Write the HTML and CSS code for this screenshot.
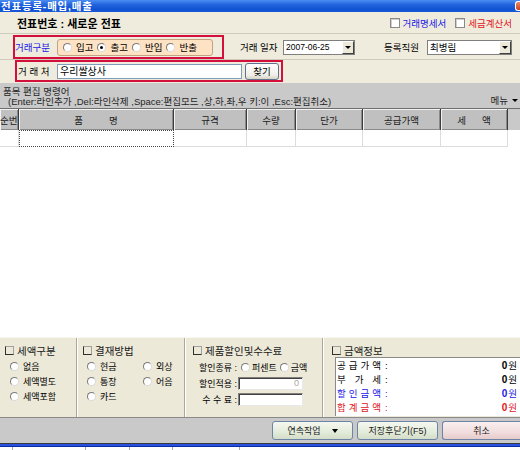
FILE: index.html
```html
<!DOCTYPE html>
<html lang="ko">
<head>
<meta charset="utf-8">
<title>전표등록-매입,매출</title>
<link rel="stylesheet" href="styles.css">
</head>
<body>
<div class="titlebar"><span class="title">전표등록-매입,매출</span><span class="closebtn"></span></div>

<div class="row1">
  <span class="docno">전표번호 : 새로운 전표</span>
  <div class="chks">
    <span class="chk"><span class="cbox"></span><span class="blue">거래명세서</span></span>
    <span class="chk"><span class="cbox"></span><span class="red">세금계산서</span></span>
  </div>
</div>

<div class="row2">
  <div class="redbox rb1">
    <span class="blue lbl-type">거래구분</span>
    <div class="orange">
      <span class="radio"><span class="rc"></span>입고</span>
      <span class="radio"><span class="rc on"></span>출고</span>
      <span class="radio"><span class="rc"></span>반입</span>
      <span class="radio"><span class="rc"></span>반출</span>
    </div>
  </div>
  <span class="lbl date-lbl">거래 일자</span>
  <div class="combo date"><span class="val num">2007-06-25</span><span class="dd"></span></div>
  <span class="lbl staff-lbl">등록직원</span>
  <div class="combo staff"><span class="val">최병림</span><span class="dd"></span></div>
</div>

<div class="row3">
  <div class="redbox rb2">
    <span class="vendor-lbl">거 래 처</span>
    <div class="input vendor">우리쌀상사</div>
    <div class="btn find">찾기</div>
  </div>
</div>

<div class="cmdbar">
  <div class="cmdtext">
    <div class="cmd1">품목 편집 명령어</div>
    <div class="cmd2">(Enter:라인추가 ,Del:라인삭제 ,Space:편집모드 ,상,하,좌,우 키:이 ,Esc:편집취소)</div>
  </div>
  <div class="menu">메뉴 <span class="tri"></span></div>
</div>

<div class="grid">
  <div class="ghead">
    <div class="gh c1">순번</div>
    <div class="gh c2"><span>품</span><span class="sp2">명</span></div>
    <div class="gh c3">규격</div>
    <div class="gh c4">수량</div>
    <div class="gh c5">단가</div>
    <div class="gh c6">공급가액</div>
    <div class="gh c7"><span>세</span><span class="sp7">액</span></div>
  </div>
  <div class="grow">
    <div class="gc c1"></div>
    <div class="gc c2 focus"></div>
    <div class="gc c3"></div>
    <div class="gc c4"></div>
    <div class="gc c5"></div>
    <div class="gc c6"></div>
    <div class="gc c7"></div>
  </div>
</div>

<div class="bottom">
  <div class="grp g1">
    <div class="ghd"><span class="ico"></span>세액구분</div>
    <div class="items">
      <div class="item"><span class="rc"></span>없음</div>
      <div class="item"><span class="rc"></span>세액별도</div>
      <div class="item"><span class="rc"></span>세액포함</div>
    </div>
  </div>
  <div class="grp g2">
    <div class="ghd"><span class="ico"></span>결재방법</div>
    <div class="items pay">
      <div class="item"><span class="rc"></span>현금</div>
      <div class="item"><span class="rc"></span>외상</div>
      <div class="item"><span class="rc"></span>통장</div>
      <div class="item"><span class="rc"></span>어음</div>
      <div class="item"><span class="rc"></span>카드</div>
    </div>
  </div>
  <div class="grp g3">
    <div class="ghd"><span class="ico"></span>제품할인및수수료</div>
    <div class="items disc">
      <div class="drow"><span class="dlbl">할인종류 :</span><span class="ritem"><span class="rc"></span>퍼센트</span><span class="ritem"><span class="rc"></span>금액</span></div>
      <div class="drow"><span class="dlbl">할인적용 :</span><span class="sunken">0</span></div>
      <div class="drow"><span class="dlbl">수 수 료 :</span><span class="sunken"></span></div>
    </div>
  </div>
  <div class="grp g4">
    <div class="ghd"><span class="ico"></span>금액정보</div>
    <div class="amtbox">
      <div class="arow"><span class="alb"><span>공</span><span>급</span><span>가</span><span>액</span></span><span class="colon">:</span><span class="aval"><b>0</b>원</span></div>
      <div class="arow"><span class="alb"><span>부</span><span>가</span><span>세</span></span><span class="colon">:</span><span class="aval"><b>0</b>원</span></div>
      <div class="arow blue"><span class="alb"><span>할</span><span>인</span><span>금</span><span>액</span></span><span class="colon">:</span><span class="aval"><b>0</b>원</span></div>
      <div class="arow red"><span class="alb"><span>합</span><span>계</span><span>금</span><span>액</span></span><span class="colon">:</span><span class="aval"><b>0</b>원</span></div>
    </div>
  </div>
</div>

<div class="btnbar">
  <div class="bbtn">연속작업<span class="tri btri"></span></div>
  <div class="bbtn">저장후닫기(F5)</div>
  <div class="bbtn cancel">취소</div>
</div>

<div class="footer">
  <div class="fblue"></div>
  <div class="fticks">
    <span class="ft" style="width:13px"></span>
    <span class="ft" style="width:73px"></span>
    <span class="ft" style="width:44px"></span>
    <span class="ft" style="width:43px"></span>
    <span class="ft" style="width:67px"></span>
  </div>
</div>
</body>
</html>
```

FILE: styles.css
```css
* { box-sizing: border-box; }
html, body { margin: 0; padding: 0; }
body {
  width: 520px;
  height: 450px;
  overflow: hidden;
  background: #ece9d8;
  font-family: "Liberation Sans", "Noto Sans CJK KR", sans-serif;
  font-size: 9.5px;
  color: #000;
}
.blue { color: #2020e6; }
.red { color: #e0141c; }

/* title bar */
.titlebar {
  height: 12px;
  display: flex;
  align-items: center;
  background: linear-gradient(#4a8ef2, #2262dc 40%, #0f52d2 80%, #1a5ad8);
  color: #fff;
  font-weight: bold;
  font-size: 10.5px;
  letter-spacing: 0.8px;
  line-height: 12px;
  padding-left: 1px;
  overflow: hidden;
}
.closebtn {
  margin-left: auto;
  width: 5px;
  height: 10px;
  background: linear-gradient(#ea8a70, #c8401e);
  border: 1px solid #fff;
  border-right: none;
  border-radius: 3px 0 0 3px;
}

/* row 1 */
.row1 {
  height: 22px;
  display: flex;
  align-items: center;
  padding-left: 17px;
  background: #efecdd;
  border-bottom: 1px solid #cfcbba;
}
.docno { font-weight: bold; font-size: 11px; }
.chks { margin-left: auto; display: flex; align-items: center; padding-right: 8px; }
.chk { display: flex; align-items: center; }
.chk + .chk { margin-left: 9px; }
.cbox {
  width: 10px;
  height: 10px;
  background: #fff;
  border: 1px solid #8a8a8a;
  box-shadow: inset 1px 1px #cfcfcf;
  margin-right: 3px;
}

/* row 2 */
.row2 {
  height: 26px;
  padding: 1px 0 0 13px;
  display: flex;
  align-items: center;
  background: #efecdd;
  border-bottom: 1px solid #cfcbba;
}
.redbox {
  border: 2px solid #d3103c;
  display: flex;
  align-items: center;
}
.rb1 { width: 211px; height: 24px; }
.lbl-type { width: 42px; }
.orange {
  width: 156px;
  height: 17px;
  background: #fde2c4;
  border: 1px solid #c4a281;
  border-radius: 3px;
  display: flex;
  align-items: center;
  padding-left: 5px;
  gap: 4px;
}
.radio { display: flex; align-items: center; gap: 4px; }
.rc {
  position: relative;
  flex: none;
  width: 9px;
  height: 9px;
  border-radius: 50%;
  background: #fff;
  border: 1px solid;
  border-color: #7a7a7a #dadada #dadada #7a7a7a;
}
.rc.on::after {
  content: "";
  position: absolute;
  left: 2px;
  top: 2px;
  width: 3px;
  height: 3px;
  border-radius: 50%;
  background: #000;
}
.date-lbl { margin-left: 16px; width: 43px; }
.staff-lbl { margin-left: 29px; width: 43px; }
.combo {
  height: 15px;
  background: #fff;
  border: 1px solid #7f7f7f;
  display: flex;
  align-items: center;
}
.date { width: 72px; }
.staff { width: 85px; }
.val { flex: 1; padding-left: 2px; line-height: 13px; }
.num { font-size: 8.5px; }
.dd {
  width: 12px;
  height: 13px;
  background: #ece9d8;
  border: 1px solid;
  border-color: #fff #404040 #404040 #fff;
  display: flex;
  align-items: center;
  justify-content: center;
}
.dd::before {
  content: "";
  border-left: 3px solid transparent;
  border-right: 3px solid transparent;
  border-top: 3px solid #000;
}

/* row 3 */
.row3 {
  height: 23px;
  padding-left: 15px;
  display: flex;
  align-items: flex-start;
  background: #efecdd;
}
.rb2 { width: 268px; height: 22px; }
.vendor-lbl { width: 40px; padding-left: 1px; }
.input.vendor {
  width: 185px;
  height: 15px;
  background: #fff;
  border: 1px solid #7f9db9;
  font-size: 10px;
  line-height: 13px;
  padding-left: 2px;
}
.btn.find {
  margin-left: 3px;
  width: 34px;
  height: 17px;
  border: 1px solid #5f7391;
  border-radius: 3px;
  background: linear-gradient(#ffffff, #efeee8 75%, #d8d2c6);
  display: flex;
  align-items: center;
  justify-content: center;
}

/* command bar */
.cmdbar {
  height: 26px;
  background: #c9c9c9;
  border-bottom: 1px solid #6e6e6e;
  display: flex;
  color: #262626;
  font-size: 9.5px;
}
.cmdtext { flex: 1; padding-top: 4px; }
.cmd1 { padding-left: 3px; line-height: 10px; }
.cmd2 { padding-left: 8px; line-height: 10px; }
.menu {
  padding-top: 10px;
  padding-right: 2px;
  line-height: 10px;
  display: flex;
  align-items: center;
  gap: 4px;
}
.tri {
  display: inline-block;
  width: 0;
  height: 0;
  border-left: 3px solid transparent;
  border-right: 3px solid transparent;
  border-top: 3px solid #000;
}

/* grid */
.grid { height: 228px; background: #fff; }
.ghead { display: flex; height: 21px; background: #c9c9c9; }
.gh {
  background: #c0c0c0;
  border-right: 1px solid #3c3c3c;
  box-shadow: inset 1px 1px #f2f2f2, inset -1px -1px #8a8a8a;
  display: flex;
  align-items: center;
  justify-content: center;
  color: #1a1a1a;
}
.c1 { width: 19px; }
.c2 { width: 155px; }
.c3 { width: 73px; }
.c4 { width: 49px; }
.c5 { width: 67px; }
.c6 { width: 78px; }
.c7 { width: 67px; }
.gh.c1 { justify-content: flex-start; overflow: hidden; }
.sp2 { margin-left: 26px; }
.sp7 { margin-left: 16px; }
.grow { display: flex; height: 17px; }
.gc { border-right: 1px solid #dcdcdc; border-bottom: 1px solid #dcdcdc; }
.gc.focus { border: 1px dotted #444; }

/* bottom panel */
.bottom {
  height: 80px;
  display: flex;
  background: #ece9d8;
  border-top: 1px solid #f8f7f0;
}
.grp {
  padding-top: 5px;
  border-right: 1px solid #aca899;
  box-shadow: 1px 0 #ffffff;
}
.g1 { width: 77px; padding-left: 5px; }
.g2 { width: 108px; padding-left: 6px; }
.g3 { width: 138px; padding-left: 8px; }
.g4 { flex: 1; border-right: none; box-shadow: none; padding-left: 9px; }
.ghd {
  display: flex;
  align-items: center;
  height: 14px;
  font-size: 10.5px;
  color: #1a1a1a;
}
.ico {
  width: 9px;
  height: 9px;
  border: 1px solid;
  border-color: #a0a0a0 #a0a0a0 #303030 #303030;
  margin-right: 3px;
}
.items { margin-top: 2px; font-size: 9px; }
.item { height: 15px; display: flex; align-items: center; gap: 4px; }
.g1 .items { padding-left: 5px; }
.pay {
  display: grid;
  grid-template-columns: 56px auto;
  padding-left: 4px;
}
.disc { margin-top: 2px; }
.drow { height: 16px; display: flex; align-items: center; }
.dlbl { width: 44px; text-align: right; margin-right: 1px; }
.ritem { display: flex; align-items: center; gap: 2px; margin-left: 3px; }
.sunken {
  width: 65px;
  height: 13px;
  background: #fff;
  border: 1px solid;
  border-color: #808080 #e8e8e8 #e8e8e8 #808080;
  box-shadow: inset 1px 1px #404040;
  color: #a8a8a8;
  text-align: right;
  padding-right: 3px;
  line-height: 11px;
  font-size: 9px;
}
.amtbox {
  margin-left: 3px;
  margin-top: 0;
  height: 59px;
  background: #fff;
  border-top: 1px solid #8a8a8a;
  border-left: 1px solid #8a8a8a;
  padding-left: 1px;
  font-size: 9.5px;
}
.arow { display: flex; align-items: center; height: 14px; }
.alb { width: 44px; display: flex; justify-content: space-between; }
.colon { margin-left: 4px; }
.aval { margin-left: auto; padding-right: 3px; }
.aval b { font-size: 10px; margin-right: 1px; }

/* button bar */
.btnbar {
  height: 26px;
  background: #c9c9c9;
  border-top: 1px solid #8a8a8a;
  display: flex;
  align-items: center;
  justify-content: flex-end;
  gap: 4px;
}
.bbtn {
  width: 81px;
  height: 19px;
  border: 1px solid #6d84a6;
  border-radius: 3px;
  background: linear-gradient(#f5f8ef, #e3ebda 60%, #d3ddc8);
  display: flex;
  align-items: center;
  justify-content: center;
  font-size: 9px;
  color: #1a1a1a;
}
.btri { margin-left: 11px; border-left-width: 3px; border-right-width: 3px; border-top-width: 4px; }
.cancel {
  width: 78px;
  background: linear-gradient(#fbefef, #f1dddd 60%, #e7cbcb);
  border-right: none;
  border-radius: 3px 0 0 3px;
}

/* footer */
.footer { height: 7px; border-top: 1px solid #3a3a3a; background: #fff; }
.fblue { height: 3px; background: #2a50e0; border-bottom: 1px solid #0b2ca8; }
.fticks { display: flex; height: 3px; }
.ft { border-right: 1px solid #a8a8a8; }
```
